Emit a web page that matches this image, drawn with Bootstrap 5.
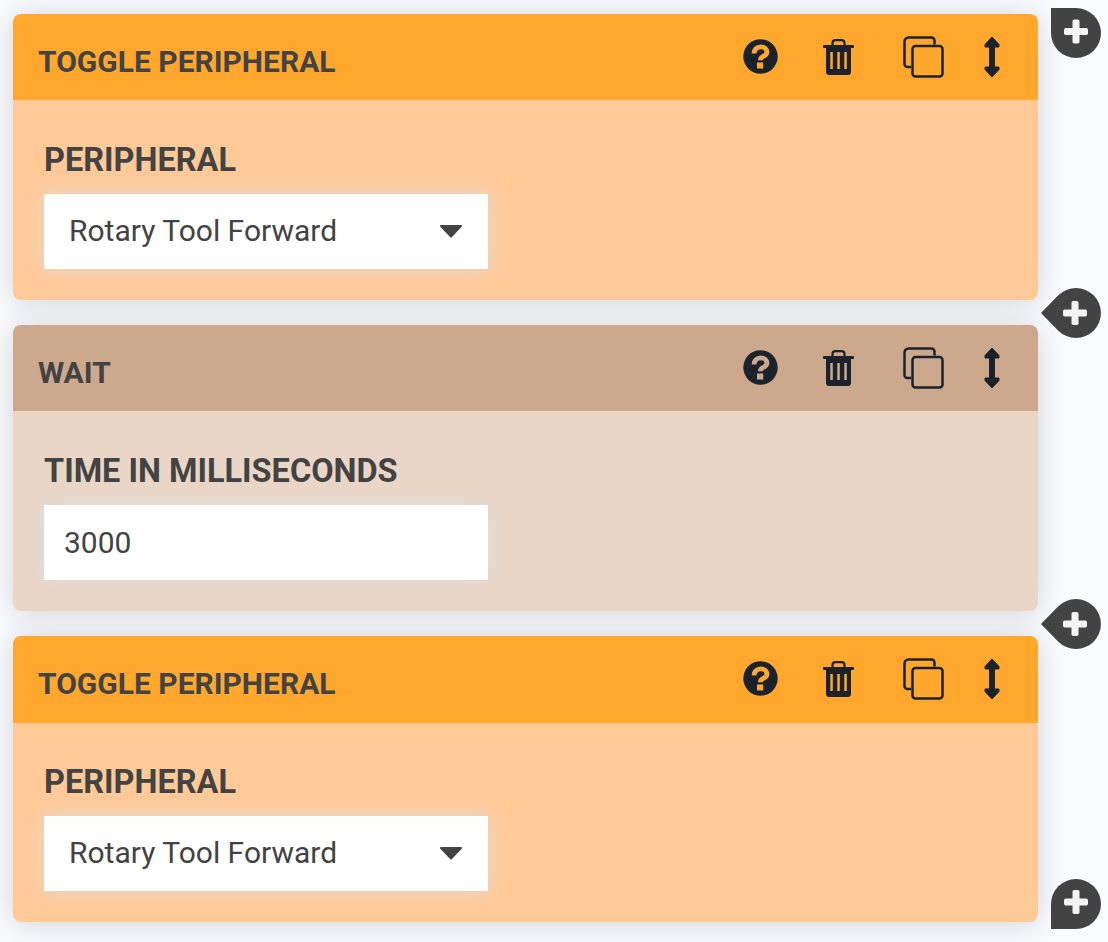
<!DOCTYPE html>
<html lang="en">
<head>
  <meta charset="UTF-8">
  <meta name="viewport" content="width=device-width, initial-scale=1.0">
  <title>Sequence steps</title>
  <link href="https://cdn.jsdelivr.net/npm/bootstrap@5.3.0/dist/css/bootstrap.min.css" rel="stylesheet">
  <style>
    html, body { height: 100%; }
    body {
      background: #fafbfe;
      font-family: Roboto, sans-serif;
      color: #434343;
      overflow: hidden;
    }
    .step-list {
      width: 1025px;
      margin-left: 13px;
      padding-top: 14px;
      display: flex;
      flex-direction: column;
      gap: 25px;
    }
    .step {
      position: relative;
      height: 286px;
      border-radius: 8px;
      box-shadow: 0 2px 30px rgba(0, 0, 0, .16);
    }
    .step-head {
      height: 86px;
      padding: 0 28px 0 25px;
      border-radius: 8px 8px 0 0;
    }
    .step-title {
      font-size: 30px;
      font-weight: 700;
      line-height: 1;
      margin: 9px 0 0;
      color: #434343;
    }
    .step-body {
      height: 200px;
      padding: 42px 0 0 31px;
      border-radius: 0 0 8px 8px;
    }
    .step:last-child .step-head { height: 87px; }
    .step:last-child .step-body { height: 199px; padding-top: 41px; }
    .field-name {
      display: block;
      font-size: 32.5px;
      font-weight: 700;
      line-height: 36px;
      margin: 0 0 16px;
    }
    .field-box {
      width: 444px;
      height: 75px;
      background: #fff;
      color: #434343;
      font-size: 30px;
      box-shadow: 0 0 18px rgba(215, 225, 235, .75);
    }
    .is-peripheral .step-head { background: #ffa82d; }
    .is-peripheral .step-body { background: #ffc998; }
    .is-wait .step-head { background: #cca98c; }
    .is-wait .step-body { background: #ead6c6; }
    .pick-box { padding: 0 25px 2px 25px; }
    .num-box { padding: 0 20px; }
    .caret-down { display: block; }
    .tool-icon { position: absolute; color: #1c222b; }
    .ico-help { left: 730px; top: 25px; }
    .ico-trash { left: 810px; top: 25px; }
    .ico-copy { left: 890px; top: 22px; }
    .ico-move { left: 966px; top: 22px; }
    .add-pin { position: absolute; width: 60px; height: 50px; }
    .pin-first { left: 1028px; top: -6px; }
    .pin-mid { left: 1028px; top: 274px; }
    .pin-last { left: 1028px; top: 243px; }
  </style>
</head>
<body>
  <div class="step-list">

    <!-- Toggle peripheral -->
    <div class="step is-peripheral">
      <div class="step-head d-flex align-items-center">
        <h2 class="step-title text-uppercase">Toggle Peripheral</h2>
      </div>
      <svg class="tool-icon ico-help" width="35" height="35" viewBox="0 0 35 35"><use href="#i-help"/></svg>
      <svg class="tool-icon ico-trash" width="32" height="36" viewBox="0 0 32 36"><use href="#i-trash"/></svg>
      <svg class="tool-icon ico-copy" width="41" height="42" viewBox="0 0 41 42"><use href="#i-copy"/></svg>
      <svg class="tool-icon ico-move" width="26" height="42" viewBox="0 0 26 42"><use href="#i-move"/></svg>
      <svg class="add-pin pin-first" viewBox="0 0 60 50"><use href="#i-pin-top"/></svg>
      <svg class="add-pin pin-mid" viewBox="0 0 60 50"><use href="#i-pin-side"/></svg>
      <div class="step-body">
        <label class="field-name text-uppercase">Peripheral</label>
        <div class="field-box pick-box d-flex align-items-center justify-content-between">
          <span>Rotary Tool Forward</span>
          <svg class="caret-down" width="24" height="14" viewBox="0 0 24 14"><use href="#i-caret"/></svg>
        </div>
      </div>
    </div>

    <!-- Wait -->
    <div class="step is-wait">
      <div class="step-head d-flex align-items-center">
        <h2 class="step-title text-uppercase">Wait</h2>
      </div>
      <svg class="tool-icon ico-help" width="35" height="35" viewBox="0 0 35 35"><use href="#i-help"/></svg>
      <svg class="tool-icon ico-trash" width="32" height="36" viewBox="0 0 32 36"><use href="#i-trash"/></svg>
      <svg class="tool-icon ico-copy" width="41" height="42" viewBox="0 0 41 42"><use href="#i-copy"/></svg>
      <svg class="tool-icon ico-move" width="26" height="42" viewBox="0 0 26 42"><use href="#i-move"/></svg>
      <svg class="add-pin pin-mid" viewBox="0 0 60 50"><use href="#i-pin-side"/></svg>
      <div class="step-body">
        <label class="field-name text-uppercase">Time in milliseconds</label>
        <div class="field-box num-box d-flex align-items-center">3000</div>
      </div>
    </div>

    <!-- Toggle peripheral -->
    <div class="step is-peripheral">
      <div class="step-head d-flex align-items-center">
        <h2 class="step-title text-uppercase">Toggle Peripheral</h2>
      </div>
      <svg class="tool-icon ico-help" width="35" height="35" viewBox="0 0 35 35"><use href="#i-help"/></svg>
      <svg class="tool-icon ico-trash" width="32" height="36" viewBox="0 0 32 36"><use href="#i-trash"/></svg>
      <svg class="tool-icon ico-copy" width="41" height="42" viewBox="0 0 41 42"><use href="#i-copy"/></svg>
      <svg class="tool-icon ico-move" width="26" height="42" viewBox="0 0 26 42"><use href="#i-move"/></svg>
      <svg class="add-pin pin-last" viewBox="0 0 60 50"><use href="#i-pin-bottom"/></svg>
      <div class="step-body">
        <label class="field-name text-uppercase">Peripheral</label>
        <div class="field-box pick-box d-flex align-items-center justify-content-between">
          <span>Rotary Tool Forward</span>
          <svg class="caret-down" width="24" height="14" viewBox="0 0 24 14"><use href="#i-caret"/></svg>
        </div>
      </div>
    </div>
  </div>

  <!-- shared icons -->
  <svg width="0" height="0" class="position-absolute">
    <defs>
      <mask id="help-cut">
        <rect width="35" height="35" fill="#fff"/>
        <path d="M11 14.500c0-3.800 2.900-6.700 6.700-6.700 3.600 0 6.300 2.300 6.300 5.400 0 4.200-6.700 3.600-6.700 8" fill="none" stroke="#000" stroke-width="4.800"/>
        <rect x="14" y="23.500" width="6.200" height="6" fill="#000"/>
      </mask>
      <g id="i-help">
        <circle cx="17.500" cy="17.500" r="17.200" fill="#1c222b" mask="url(#help-cut)"/>
      </g>
      <g id="i-trash" fill="#1c222b">
        <rect x="0" y="6" width="31" height="3" rx="1"/>
        <path d="M9.500 7v-3c0-1.700 1.200-2.900 3-2.900h6c1.800 0 3 1.200 3 2.900v3" fill="none" stroke="#1c222b" stroke-width="2.200"/>
        <path fill-rule="evenodd" d="M3 8h25v25c0 1.700-1.300 3-3 3h-19c-1.700 0-3-1.300-3-3zM7.300 13v17h2.500v-17zM14.300 13v17h2.500v-17zM21.300 13v17h2.500v-17z"/>
      </g>
      <g id="i-copy" fill="none" stroke="#1c222b" stroke-width="2.500" stroke-linejoin="round">
        <path d="M8 31h-3.500a3 3 0 0 1-3-3v-22.500a4 4 0 0 1 4-4h23a3 3 0 0 1 3 3v4"/>
        <rect x="9.500" y="10" width="30" height="30.500" rx="3"/>
      </g>
      <g id="i-move" fill="#1c222b">
        <path d="M13 1l7 7.500v2.500h-4.500v20h4.500v2.500l-7 7.500l-7-7.500v-2.500h4.500v-20h-4.500v-2.500z" stroke="#1c222b" stroke-linejoin="round"/>
      </g>
      <path id="i-caret" d="M2 2h20l-10 10.500z" fill="#434343" stroke="#434343" stroke-width="2" stroke-linejoin="round"/>
      <g id="i-plus-mark" fill="#f4f4f4">
        <rect x="-12" y="-3.500" width="24" height="7" rx="1.800"/>
        <rect x="-3.500" y="-12" width="7" height="24" rx="1.800"/>
      </g>
      <g id="i-pin-top">
        <path d="M10 0h25a25 25 0 1 1-25 25z" fill="#434343"/>
        <use href="#i-plus-mark" x="35" y="23.500"/>
      </g>
      <g id="i-pin-side">
        <path d="M0 25L17.300 7.300A25 25 0 1 1 17.300 42.700z" fill="#434343"/>
        <use href="#i-plus-mark" x="34" y="25"/>
      </g>
      <g id="i-pin-bottom">
        <path d="M10 50v-25a25 25 0 1 1 25 25z" fill="#434343"/>
        <use href="#i-plus-mark" x="35" y="23"/>
      </g>
    </defs>
  </svg>

  <script src="https://cdn.jsdelivr.net/npm/bootstrap@5.3.0/dist/js/bootstrap.bundle.min.js"></script>
</body>
</html>
